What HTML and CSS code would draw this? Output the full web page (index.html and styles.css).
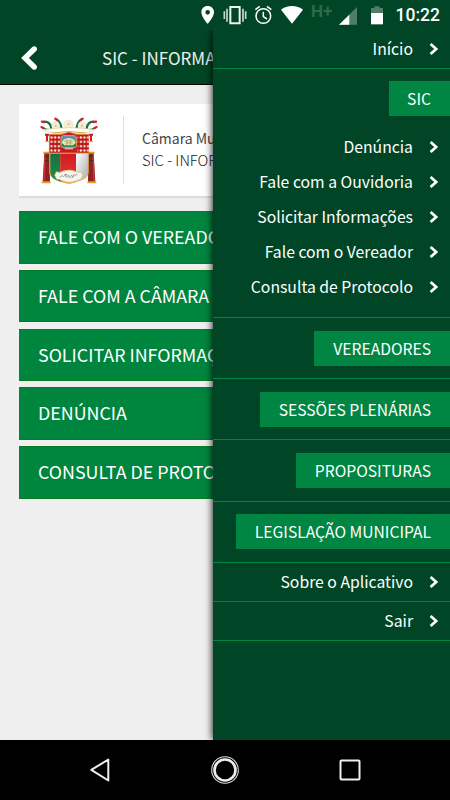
FILE: index.html
```html
<!DOCTYPE html>
<html lang="pt-BR">
<head>
    <meta charset="UTF-8">
    <meta name="viewport" content="width=device-width, initial-scale=1.0">
    <title>SIC</title>
    <link rel="stylesheet" href="styles.css">
</head>
<body>
    <svg class="defs" width="0" height="0">
        <symbol id="chevron" viewBox="0 0 10 14">
            <path d="M1.6 1.9 L7.2 7 L1.6 12.1" fill="none" stroke="#fff" stroke-width="2.7"/>
        </symbol>
    </svg>

    <!-- Status bar -->
    <div class="status-bar">
        <svg width="260" height="30" viewBox="0 0 780 90">
            <path d="M53 18c-11 0-19 8-19 19 0 14 19 35 19 35s19-21 19-35c0-11-8-19-19-19zm0 12a7 7 0 1 1 0 14 7 7 0 0 1 0-14z" fill="#fff" fill-rule="evenodd"/>
            <path d="M121 21h28v49h-28z" fill="none" stroke="#eef3f0" stroke-width="6"/>
            <path d="M111 26v39M103 34v23M159 26v39M167 34v23" fill="none" stroke="#c9d6cf" stroke-width="5"/>
            <g fill="none" stroke="#fff" stroke-width="4.5">
                <circle cx="220" cy="48" r="22"/>
                <path d="M220 35v15l11 7M196 29l13-10M244 29l-13-10"/>
            </g>
            <path d="M273 29c18-15 48-15 66 0l-33 42z" fill="#fff"/>
            <path d="M501 21v53h-54z" fill="#4d7f67"/>
            <path d="M478 44v30h-31z" fill="#fff"/>
            <path d="M543 24h10v-5h16v5h10v15h-36z" fill="#4d7f67"/>
            <path d="M543 39h36v34h-36z" fill="#fff"/>
        </svg>
        <span class="network">H+</span>
        <span class="clock">10:22</span>
    </div>

    <!-- Page behind the menu -->
    <main class="page">
        <header class="header">
            <svg class="back" width="18" height="26" viewBox="0 0 18 26">
                <path d="M14.2 4 L5 13 L14.2 22" fill="none" stroke="#fff" stroke-width="5.4" stroke-linecap="round" stroke-linejoin="miter"/>
            </svg>
            <h1>SIC - INFORMAÇÕES</h1>
        </header>

        <div class="content">
            <div class="card">
                <svg class="crest" width="70" height="84" viewBox="0 0 210 252">
                    <defs>
                        <linearGradient id="green" x2="0" y2="1"><stop stop-color="#16713c"/><stop offset="1" stop-color="#238c50"/></linearGradient>
                        <linearGradient id="red" x2="0" y2="1"><stop stop-color="#cf1c22"/><stop offset="1" stop-color="#e6383c"/></linearGradient>
                        <linearGradient id="silver" x2="1" y2="1"><stop stop-color="#fff"/><stop offset="1" stop-color="#aaa"/></linearGradient>
                        <pattern id="grid" x="47" y="82" width="11" height="13" patternUnits="userSpaceOnUse">
                            <path d="M0 0h11v13h-11z" fill="#b91722"/>
                            <rect x="2" y="3" width="7" height="7" rx="2" fill="#ffe7c8"/>
                        </pattern>
                    </defs>
                    <!-- plumes -->
                    <g fill="none" stroke-linecap="round">
                        <path d="M32 41q17 0 20 20M69 35q10 7 13 24M178 41q-17 0-20 20M141 35q-10 7-13 24" stroke="#16713c" stroke-width="7"/>
                        <path d="M24 41l7 1M64 32l5 3M186 41l-7 1M146 32l-5 3" stroke="#d8202b" stroke-width="7"/>
                        <path d="M28 60q10 6 20 6M182 60q-10 6-20 6" stroke="#1b7a40" stroke-width="6"/>
                        <path d="M22 57l6 3M188 57l-6 3" stroke="#d8202b" stroke-width="6"/>
                    </g>
                    <g fill="#f3eddb" stroke="#d8cfb2" stroke-width="1">
                        <circle cx="65" cy="53" r="12"/>
                        <circle cx="104" cy="50" r="14"/>
                        <circle cx="144" cy="53" r="12"/>
                    </g>
                    <g fill="#d6bd63"><circle cx="65" cy="53" r="3"/><circle cx="104" cy="49" r="3"/><circle cx="144" cy="53" r="3"/></g>
                    <path d="M27 65q78-12 156 0-20 12-78 12t-78-12z" fill="#fffdf5" stroke="#dacb9e" stroke-width="2"/>
                    <path d="M55 75q50-9 100 0" fill="none" stroke="#d9a545" stroke-width="3"/>
                    <!-- side columns and tassels -->
                    <path d="M33 80h12M39 80v20M165 80h12M171 80v20" stroke="#c91b25" stroke-width="6"/>
                    <path d="M33 101h12M165 101h12" stroke="#dca735" stroke-width="3"/>
                    <path d="M31 135h16l1 86H26z" fill="#8e2225"/>
                    <path d="M163 135h16l5 86h-22z" fill="#8e2225"/>
                    <path d="M33 140l-3 78M177 140l3 78" stroke="#d43531" stroke-width="4"/>
                    <path d="M28 134h21M161 134h21M23 223h27M160 223h27" stroke="#d9a52d" stroke-width="5"/>
                    <path d="M33 145h12M33 158h12M165 145h12M165 158h12" stroke="#343022" stroke-width="3"/>
                    <!-- upper field -->
                    <path d="M46 79h36l23-7 23 7h36v57H46z" fill="#c51c24" stroke="#e0a039" stroke-width="2"/>
                    <path d="M47 82h33v52H47zM131 82h33v52h-33z" fill="url(#grid)"/>
                    <rect x="81" y="83" width="46" height="36" rx="7" fill="#568ec0" stroke="#d5ae40" stroke-width="3"/>
                    <path d="M83 108h42v8h-42z" fill="#298441"/>
                    <path d="M84 104q2-12 20-14 19 2 20 14l-7 8H91z" fill="#eae9b4"/>
                    <path d="M90 99h28M94 105h22M99 94v17M109 94v17" stroke="#8d9b58" stroke-width="2"/>
                    <path d="M92 122h25" stroke="#efb5a0" stroke-width="4"/>
                    <!-- shield -->
                    <path d="M46 134h118v59q0 24-59 35-59-11-59-35z" fill="#ddb34a"/>
                    <path d="M49 137h30v84q-30-9-30-29z" fill="url(#green)"/>
                    <path d="M79 137h47v83l-21 5-26-5z" fill="url(#red)"/>
                    <path d="M126 137h35v55q0 20-35 29z" fill="url(#silver)"/>
                    <path d="M67 191q12 5 18-1 20-8 39 0 8 5 17 1l5 11-7 13q-8-2-13 4-20 9-41 0-8-6-17-5l-6-12z" fill="#f5f4ee" stroke="#dfb94b" stroke-width="2"/>
                    <path d="M77 207l8-4 4 3 6-6 2 8 7-7 1 8 8-7 3 4 4-7 4 4 6-5M91 200l9-1M112 209l8-3" fill="none" stroke="#777" stroke-width="2"/>
                </svg>
                <div class="card-text">
                    <p>Câmara Municipal</p>
                    <p class="card-title">SIC - INFORMAÇÕES</p>
                </div>
            </div>

            <nav class="services">
                <a class="service">FALE COM O VEREADOR</a>
                <a class="service">FALE COM A CÂMARA</a>
                <a class="service">SOLICITAR INFORMAÇÕES</a>
                <a class="service">DENÚNCIA</a>
                <a class="service">CONSULTA DE PROTOCOLO</a>
            </nav>
        </div>
    </main>

    <!-- Side menu -->
    <aside class="drawer">
        <div class="row"><a class="link">Início<svg><use href="#chevron"/></svg></a></div>
        <div class="group">
            <a class="tag">SIC</a>
            <div class="links">
                <a class="link">Denúncia<svg><use href="#chevron"/></svg></a>
                <a class="link">Fale com a Ouvidoria<svg><use href="#chevron"/></svg></a>
                <a class="link">Solicitar Informações<svg><use href="#chevron"/></svg></a>
                <a class="link">Fale com o Vereador<svg><use href="#chevron"/></svg></a>
                <a class="link">Consulta de Protocolo<svg><use href="#chevron"/></svg></a>
            </div>
        </div>
        <div class="section"><a class="tag">VEREADORES</a></div>
        <div class="section"><a class="tag">SESSÕES PLENÁRIAS</a></div>
        <div class="section"><a class="tag">PROPOSITURAS</a></div>
        <div class="section"><a class="tag">LEGISLAÇÃO MUNICIPAL</a></div>
        <div class="row"><a class="link">Sobre o Aplicativo<svg><use href="#chevron"/></svg></a></div>
        <div class="row"><a class="link">Sair<svg><use href="#chevron"/></svg></a></div>
    </aside>

    <!-- Android navigation bar -->
    <footer class="nav-bar">
        <svg width="24" height="30" viewBox="0 0 24 30"><path d="M3.3 14.8 L20.3 4.6 V25.5 Z" fill="none" stroke="#eee" stroke-width="2" stroke-linejoin="round"/></svg>
        <svg width="30" height="30" viewBox="0 0 30 30"><circle cx="15" cy="15" r="13.3" fill="none" stroke="#ddd" stroke-width="1.1"/><circle cx="15" cy="15" r="10.5" fill="none" stroke="#eee" stroke-width="2.6"/></svg>
        <svg width="24" height="30" viewBox="0 0 24 30"><rect x="2.5" y="5.5" width="19" height="19" rx="1" fill="none" stroke="#eee" stroke-width="2"/></svg>
    </footer>
</body>
</html>
```

FILE: styles.css
```css
:root {
    --dark-green: #004526;
    --green: #008542;
    --service-green: #00853e;
    --page-bg: #efefef;
}

* {
    box-sizing: border-box;
}

body {
    margin: 0;
    width: 450px;
    height: 800px;
    overflow: hidden;
    background: var(--page-bg);
    font-family: "Noto Sans CJK SC", "Open Sans", sans-serif;
    color: #fff;
    display: grid;
    grid-template-columns: 212.5px 237.5px;
    grid-template-rows: 30px 710px 60px;
}

h1, p {
    margin: 0;
    font-weight: normal;
}

.defs {
    position: absolute;
}

/* Status bar */
.status-bar {
    grid-column: 1 / 3;
    background: var(--dark-green);
    padding-left: 190px;
    position: relative;
    font-family: Roboto, sans-serif;
}

.status-bar svg {
    display: block;
}

.network {
    position: absolute;
    left: 311px;
    top: 1px;
    font-size: 17px;
    line-height: 20px;
    font-weight: 700;
    color: #2f6a4e;
}

.clock {
    position: absolute;
    right: 10px;
    top: 4px;
    font-size: 17.5px;
    line-height: 23px;
    font-weight: 500;
}

/* Page */
.page {
    overflow: hidden;
    white-space: nowrap;
}

.header {
    height: 55px;
    width: 450px;
    background: var(--dark-green);
    border-bottom: 1px solid #000;
    display: flex;
    align-items: center;
    padding: 2px 0 0 20px;
}

.header h1 {
    margin-left: 64px;
    font-size: 17px;
    line-height: 24px;
    color: #eee;
}

.content {
    width: 450px;
    padding: 19px 19px 0;
}

.card {
    height: 92px;
    padding: 4px 15px;
    background: #fff;
    box-shadow: 0 2px 0 #dcdcdc;
    display: flex;
    align-items: center;
}

.card-text {
    height: 68px;
    margin-left: 19px;
    padding: 11px 0 0 18px;
    border-left: 1px solid #ddd;
    color: #444;
    font-size: 14px;
    line-height: 22px;
}

.card-title {
    color: #222;
    font-size: 14.8px;
    font-weight: 300;
}

.services {
    margin-top: 15px;
    display: flex;
    flex-direction: column;
    gap: 6.2px;
}

.service {
    height: 52.6px;
    padding-left: 19px;
    background: var(--service-green);
    border: 1px solid #087c22;
    border-left: 0;
    font-size: 17.85px;
    line-height: 49px;
}

/* Side menu */
.drawer {
    background: var(--dark-green);
    box-shadow: 0 0 8px #000;
    clip-path: inset(0 0 0 -14px);
    font-size: 15.75px;
    z-index: 1;
}

.row, .group, .section {
    border-bottom: 1px solid var(--green);
    display: flex;
    flex-direction: column;
    align-items: flex-end;
    justify-content: center;
}

.row {
    height: 38.9px;
}

.group {
    height: 249px;
}

.section {
    height: 61.25px;
}

.links {
    margin-top: 13px;
}

.link {
    height: 35px;
    padding-right: 11px;
    display: flex;
    align-items: center;
    justify-content: flex-end;
    line-height: 24px;
}

.link svg {
    width: 10px;
    height: 14px;
    margin-left: 16px;
}

.tag {
    height: 35px;
    padding: 0 19px;
    background: var(--green);
    font-size: 15.65px;
    line-height: 35px;
}

.group .tag {
    padding-left: 18px;
}

/* Navigation bar */
.nav-bar {
    grid-column: 1 / 3;
    background: #000;
    display: flex;
    align-items: center;
    justify-content: space-between;
    padding: 0 88px;
    z-index: 2;
}
```
